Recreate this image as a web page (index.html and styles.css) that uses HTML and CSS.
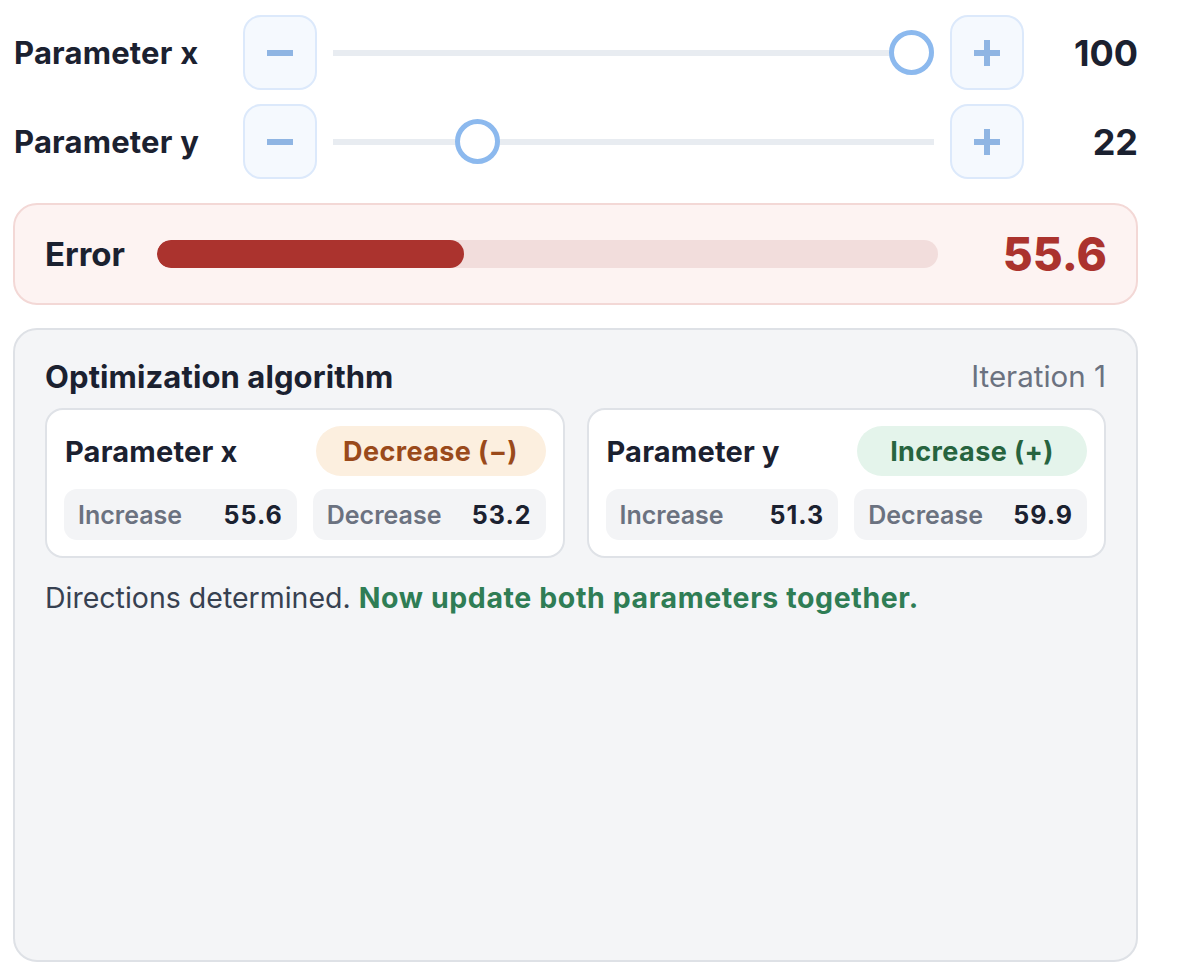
FILE: index.html
```html
<!doctype html>
<html lang="en">
<head>
    <meta charset="utf-8">
    <title>Optimization demo</title>
    <meta name="viewport" content="width=device-width, initial-scale=1">
    <link rel="stylesheet" href="styles.css">
</head>
<body>
<main class="panel">

    <div class="param-row">
        <span class="param-label">Parameter x</span>
        <button class="step-button" type="button" aria-label="Decrease x">
            <svg width="26" height="26" viewBox="0 0 26 26"><rect x="0" y="10" width="26" height="6" fill="currentColor"/></svg>
        </button>
        <input class="param-slider" type="range" min="0" max="100" value="100">
        <button class="step-button" type="button" aria-label="Increase x">
            <svg width="26" height="26" viewBox="0 0 26 26"><rect x="0" y="10" width="26" height="6" fill="currentColor"/><rect x="10" y="0" width="6" height="26" fill="currentColor"/></svg>
        </button>
        <span class="param-value">100</span>
    </div>

    <div class="param-row">
        <span class="param-label">Parameter y</span>
        <button class="step-button" type="button" aria-label="Decrease y">
            <svg width="26" height="26" viewBox="0 0 26 26"><rect x="0" y="10" width="26" height="6" fill="currentColor"/></svg>
        </button>
        <input class="param-slider" type="range" min="0" max="100" value="22">
        <button class="step-button" type="button" aria-label="Increase y">
            <svg width="26" height="26" viewBox="0 0 26 26"><rect x="0" y="10" width="26" height="6" fill="currentColor"/><rect x="10" y="0" width="6" height="26" fill="currentColor"/></svg>
        </button>
        <span class="param-value">22</span>
    </div>

    <section class="error-card">
        <span class="error-label">Error</span>
        <div class="error-bar">
            <div class="error-fill" style="width: 39.3%"></div>
        </div>
        <span class="error-value">55.6</span>
    </section>

    <section class="algo-card">
        <div class="algo-head">
            <h2 class="algo-title">Optimization algorithm</h2>
            <span class="algo-iter">Iteration 1</span>
        </div>

        <div class="probe-grid">
            <div class="probe">
                <div class="probe-head">
                    <span class="probe-name">Parameter x</span>
                    <span class="badge badge-down">Decrease (&minus;)</span>
                </div>
                <div class="probe-stats">
                    <div class="stat"><span class="stat-label">Increase</span><span class="stat-value">55.6</span></div>
                    <div class="stat"><span class="stat-label">Decrease</span><span class="stat-value">53.2</span></div>
                </div>
            </div>

            <div class="probe">
                <div class="probe-head">
                    <span class="probe-name">Parameter y</span>
                    <span class="badge badge-up">Increase (+)</span>
                </div>
                <div class="probe-stats">
                    <div class="stat"><span class="stat-label">Increase</span><span class="stat-value">51.3</span></div>
                    <div class="stat"><span class="stat-label">Decrease</span><span class="stat-value">59.9</span></div>
                </div>
            </div>
        </div>

        <p class="algo-note">Directions determined. <strong>Now update both parameters together.</strong></p>
    </section>

</main>
</body>
</html>
```

FILE: styles.css
```css
body {
    margin: 0;
    background: #ffffff;
    color: #1b2130;
    font-family: "Inter", "Noto Sans", sans-serif;
    -webkit-font-smoothing: antialiased;
}

.panel {
    width: 1125px;
    margin-left: 13px;
    padding-top: 15px;
}

/* slider rows */
.param-row {
    display: flex;
    align-items: center;
    gap: 16px;
    height: 75px;
    margin-bottom: 14px;
}

.param-label {
    width: 213px;
    padding-left: 1px;
    font-size: 31px;
    font-weight: 700;
    letter-spacing: 0.2px;
}

.step-button {
    display: flex;
    align-items: center;
    justify-content: center;
    width: 74px;
    height: 75px;
    padding: 0;
    border: 2px solid #dce9fb;
    border-radius: 18px;
    background: #f5f9fe;
    color: #8fb5e3;
    cursor: pointer;
}

.param-slider {
    flex: 1;
    height: 46px;
    margin: 0;
    background: transparent;
    -webkit-appearance: none;
    appearance: none;
}

.param-slider::-webkit-slider-runnable-track {
    height: 6px;
    background: #e8ecf1;
}

.param-slider::-webkit-slider-thumb {
    -webkit-appearance: none;
    width: 45px;
    height: 45px;
    margin-top: -19.5px;
    box-sizing: border-box;
    border: 5px solid #8cb9ee;
    border-radius: 50%;
    background: #ffffff;
}

.param-value {
    width: 98px;
    text-align: right;
    font-size: 36px;
    font-weight: 700;
}

/* error meter */
.error-card {
    display: flex;
    align-items: center;
    height: 102px;
    box-sizing: border-box;
    margin-top: 24px;
    padding: 0 29px 0 30px;
    border: 2px solid #f3d8d6;
    border-radius: 24px;
    background: #fdf3f2;
}

.error-label {
    width: 112px;
    font-size: 33px;
    font-weight: 700;
}

.error-bar {
    flex: 1;
    height: 28px;
    border-radius: 14px;
    background: #f2dddc;
    overflow: hidden;
}

.error-fill {
    height: 100%;
    border-radius: 14px;
    background: #ab332e;
}

.error-value {
    width: 169px;
    text-align: right;
    font-size: 46px;
    font-weight: 800;
    color: #ab332e;
}

/* algorithm panel */
.algo-card {
    min-height: 634px;
    box-sizing: border-box;
    margin-top: 23px;
    padding: 28px 30px;
    border: 2px solid #dee1e6;
    border-radius: 24px;
    background: #f4f5f7;
}

.algo-head {
    display: flex;
    justify-content: space-between;
    align-items: center;
    height: 36px;
    margin-bottom: 14px;
}

.algo-title {
    margin: 0;
    font-size: 31px;
    font-weight: 700;
    letter-spacing: 0.1px;
}

.algo-iter {
    font-size: 29.5px;
    color: #6b7280;
}

.probe-grid {
    display: grid;
    grid-template-columns: 1fr 1fr;
    gap: 22px;
}

.probe {
    padding: 16px 17px;
    border: 2px solid #dfe2e7;
    border-radius: 18px;
    background: #ffffff;
}

.probe-head {
    display: flex;
    justify-content: space-between;
    align-items: center;
    padding-left: 1px;
    margin-bottom: 13px;
}

.probe-name {
    font-size: 29px;
    font-weight: 700;
    letter-spacing: 0.2px;
}

.badge {
    display: flex;
    align-items: center;
    justify-content: center;
    width: 230px;
    height: 50px;
    border-radius: 25px;
    font-size: 27px;
    font-weight: 700;
    letter-spacing: 0.4px;
}

.badge-down {
    background: #fcefdf;
    color: #9a4a1b;
}

.badge-up {
    background: #e4f4eb;
    color: #27643f;
}

.probe-stats {
    display: grid;
    grid-template-columns: 1fr 1fr;
    gap: 16px;
}

.stat {
    display: flex;
    justify-content: space-between;
    align-items: center;
    height: 51px;
    padding: 0 14px;
    border-radius: 13px;
    background: #f3f4f6;
    font-size: 25px;
}

.stat-label {
    font-weight: 600;
    color: #6b7280;
}

.stat-value {
    font-weight: 700;
    letter-spacing: 1px;
    color: #1b2130;
}

.algo-note {
    margin: 22px 0 0;
    font-size: 28.5px;
    color: #374151;
}

.algo-note strong {
    letter-spacing: 0.6px;
    color: #2f7d55;
}
```
